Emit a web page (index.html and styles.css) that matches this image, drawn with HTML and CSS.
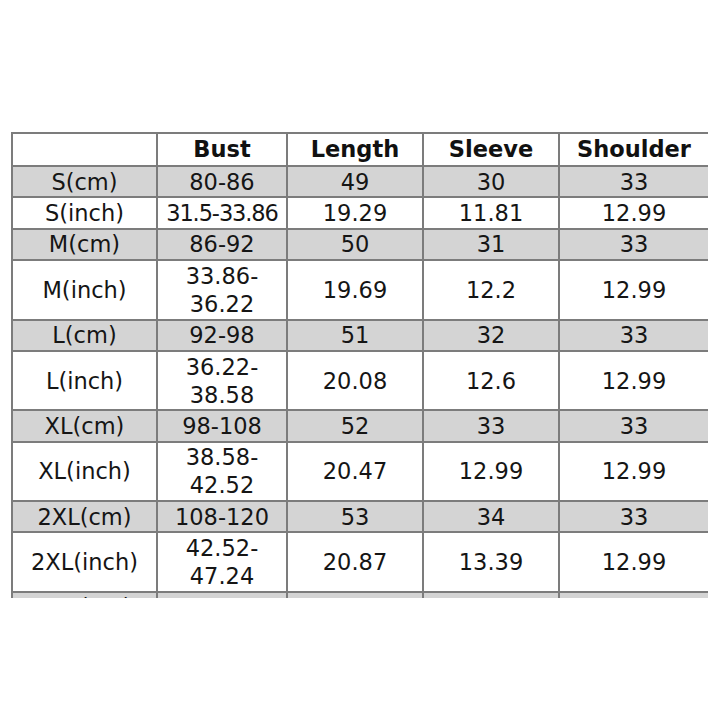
FILE: index.html
```html
<!DOCTYPE html>
<html>
<head>
<meta charset="utf-8">
<link rel="stylesheet" href="styles.css">
</head>
<body>
<div class="frame">
<table class="size-table">
<colgroup>
<col class="c1"><col class="c2"><col class="c3"><col class="c4"><col class="c5">
</colgroup>
<thead>
<tr><th></th><th>Bust</th><th>Length</th><th>Sleeve</th><th>Shoulder</th></tr>
</thead>
<tbody>
<tr class="gray"><td>S(cm)</td><td>80-86</td><td>49</td><td>30</td><td>33</td></tr>
<tr><td>S(inch)</td><td class="tight">31.5-33.86</td><td>19.29</td><td>11.81</td><td>12.99</td></tr>
<tr class="gray"><td>M(cm)</td><td>86-92</td><td>50</td><td>31</td><td>33</td></tr>
<tr><td>M(inch)</td><td>33.86-<br>36.22</td><td>19.69</td><td>12.2</td><td>12.99</td></tr>
<tr class="gray"><td>L(cm)</td><td>92-98</td><td>51</td><td>32</td><td>33</td></tr>
<tr><td>L(inch)</td><td>36.22-<br>38.58</td><td>20.08</td><td>12.6</td><td>12.99</td></tr>
<tr class="gray"><td>XL(cm)</td><td>98-108</td><td>52</td><td>33</td><td>33</td></tr>
<tr><td>XL(inch)</td><td>38.58-<br>42.52</td><td>20.47</td><td>12.99</td><td>12.99</td></tr>
<tr class="gray"><td>2XL(cm)</td><td>108-120</td><td>53</td><td>34</td><td>33</td></tr>
<tr><td>2XL(inch)</td><td>42.52-<br>47.24</td><td>20.87</td><td>13.39</td><td>12.99</td></tr>
<tr class="gray"><td>3XL(cm)</td><td>114-126</td><td>54</td><td>35</td><td>33</td></tr>
<tr><td>3XL(inch)</td><td>44.88-<br>49.61</td><td>21.26</td><td>13.78</td><td>12.99</td></tr>
</tbody>
</table>
</div>
</body>
</html>
```

FILE: styles.css
```css
html, body {
  margin: 0;
  padding: 0;
  background: #ffffff;
}

.frame {
  margin: 132px 0 0 11px;
  width: 697px;
  height: 466px;
  overflow: hidden;
}

.size-table {
  border-collapse: collapse;
  table-layout: fixed;
  width: 697px;
  font-family: "DejaVu Sans", Verdana, sans-serif;
  font-size: 22.5px;
  line-height: 28px;
  color: #151515;
}

.c1 { width: 145px; }
.c2 { width: 130px; }
.c3 { width: 136px; }
.c4 { width: 136px; }
.c5 { width: 150px; }

.size-table th,
.size-table td {
  border: 2px solid #7c7c7c;
  text-align: center;
  vertical-align: middle;
  padding: 0.7px 0;
  white-space: nowrap;
}

.size-table th {
  font-weight: bold;
  color: #111111;
  padding: 1px 0 2px;
}

.size-table tr.gray td {
  background: #d4d4d4;
}

.size-table td.tight {
  letter-spacing: -1.1px;
}
```
